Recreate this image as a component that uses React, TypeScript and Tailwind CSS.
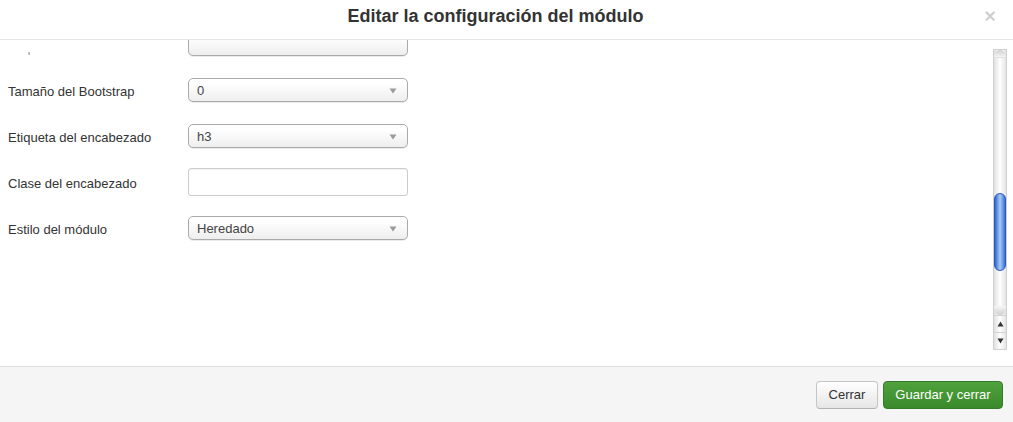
import { ReactNode } from 'react';

const fontStack = { fontFamily: '"Liberation Sans", Arial, Helvetica, sans-serif' };

function Caret() {
    return (
        <svg width="8" height="6" viewBox="0 0 8 6" className="shrink-0">
            <path d="M0.5 0.5 L7.5 0.5 L4 5.5 Z" fill="#9a9a9a" />
        </svg>
    );
}

function FakeSelect({ value }: { value?: string }) {
    return (
        <div className="w-[220px] h-[24px] flex items-center justify-between pl-[8px] pr-[10px] pt-[1px] rounded-[5px] border border-[#aaaaaa] bg-linear-to-b from-white from-20% to-[#eeeeee] shadow-[0_1px_0_rgba(0,0,0,0.08)] text-[13px] text-[#444444]">
            <span>{value}</span>
            {value !== undefined && <Caret />}
        </div>
    );
}

function FakeInput() {
    return <div className="w-[220px] h-[28px] rounded-[3px] border border-[#cccccc] bg-white shadow-[inset_0_1px_1px_rgba(0,0,0,0.06)]" />;
}

function Row({ label, children }: { label: ReactNode; children: ReactNode }) {
    return (
        <div className="h-[46px] flex items-center">
            <div className="w-[188px] pl-[8px] pt-[3px] text-[13px] text-[#333333]">{label}</div>
            {children}
        </div>
    );
}

function Scrollbar() {
    return (
        <div className="w-[21px] pl-[1px] pr-[6px] pt-[9px] pb-[16px] flex">
            <div className="w-[14px] flex flex-col border border-[#cfcfcf] bg-linear-to-r from-[#e0e0e0] via-white to-[#e4e4e4]">
                {/* riel */}
                <div className="flex-1 flex flex-col">
                    <div className="h-[8px] rounded-t-[6px] bg-linear-to-b from-[#d0d0d0] to-[#f4f4f4] border-b border-[#e0e0e0]" />
                    <div className="h-[135px]" />
                    <div className="h-[78px] rounded-full border border-[#2b57b8] bg-linear-to-r from-[#2f63cc] via-[#a8cbf6] to-[#3a70d6]" />
                    <div className="flex-1" />
                    <div className="h-[9px] rounded-b-full bg-linear-to-b from-[#f6f6f6] to-[#d0d0d0]" />
                </div>
                {/* flechas */}
                <div className="h-[17px] flex items-center justify-center border-t border-[#d2d2d2]">
                    <svg width="7" height="6" viewBox="0 0 7 6">
                        <path d="M3.5 0.5 L6.5 5.5 L0.5 5.5 Z" fill="#333333" />
                    </svg>
                </div>
                <div className="h-[17px] flex items-center justify-center border-t border-[#d2d2d2]">
                    <svg width="7" height="6" viewBox="0 0 7 6">
                        <path d="M0.5 0.5 L6.5 0.5 L3.5 5.5 Z" fill="#333333" />
                    </svg>
                </div>
            </div>
        </div>
    );
}

export default function App() {
    return (
        <div className="w-[1013px] h-[422px] flex flex-col bg-white overflow-hidden" style={fontStack}>
            {/* Cabecera */}
            <div className="h-[40px] shrink-0 flex items-center pb-[7px] border-b border-[#e5e5e5]">
                <h3 className="flex-1 pl-[7px] text-center text-[18px] font-bold text-[#333333]">
                    Editar la configuración del módulo
                </h3>
                <button className="w-[12px] mr-[17px] text-[20px] leading-none font-bold text-black/20">×</button>
            </div>

            {/* Cuerpo con scroll */}
            <div className="flex-1 flex min-h-0">
                <div className="flex-1 overflow-hidden">
                    <div className="-mt-[19px]">
                        <Row
                            label={
                                <div className="mt-[16px] h-[4px] overflow-hidden text-[#999999]">
                                    <div className="-mt-[12px] leading-[16px]">Etiqueta del módulo</div>
                                </div>
                            }
                        >
                            <FakeSelect />
                        </Row>
                        <Row label="Tamaño del Bootstrap">
                            <FakeSelect value="0" />
                        </Row>
                        <Row label="Etiqueta del encabezado">
                            <FakeSelect value="h3" />
                        </Row>
                        <Row label="Clase del encabezado">
                            <FakeInput />
                        </Row>
                        <Row label="Estilo del módulo">
                            <FakeSelect value="Heredado" />
                        </Row>
                    </div>
                </div>
                <Scrollbar />
            </div>

            {/* Pie */}
            <div className="h-[56px] shrink-0 flex items-center justify-end gap-[5px] pr-[10px] bg-[#f5f5f5] border-t border-[#dddddd]">
                <button className="h-[28px] w-[62px] rounded-[4px] border border-[#c5c5c5] border-b-[#b3b3b3] bg-linear-to-b from-white to-[#e6e6e6] text-[13px] text-[#333333]">
                    Cerrar
                </button>
                <button className="h-[28px] w-[120px] rounded-[4px] border border-[#357a28] bg-linear-to-b from-[#4fa23c] to-[#3a8a2b] text-[13px] text-white">
                    Guardar y cerrar
                </button>
            </div>
        </div>
    );
}
